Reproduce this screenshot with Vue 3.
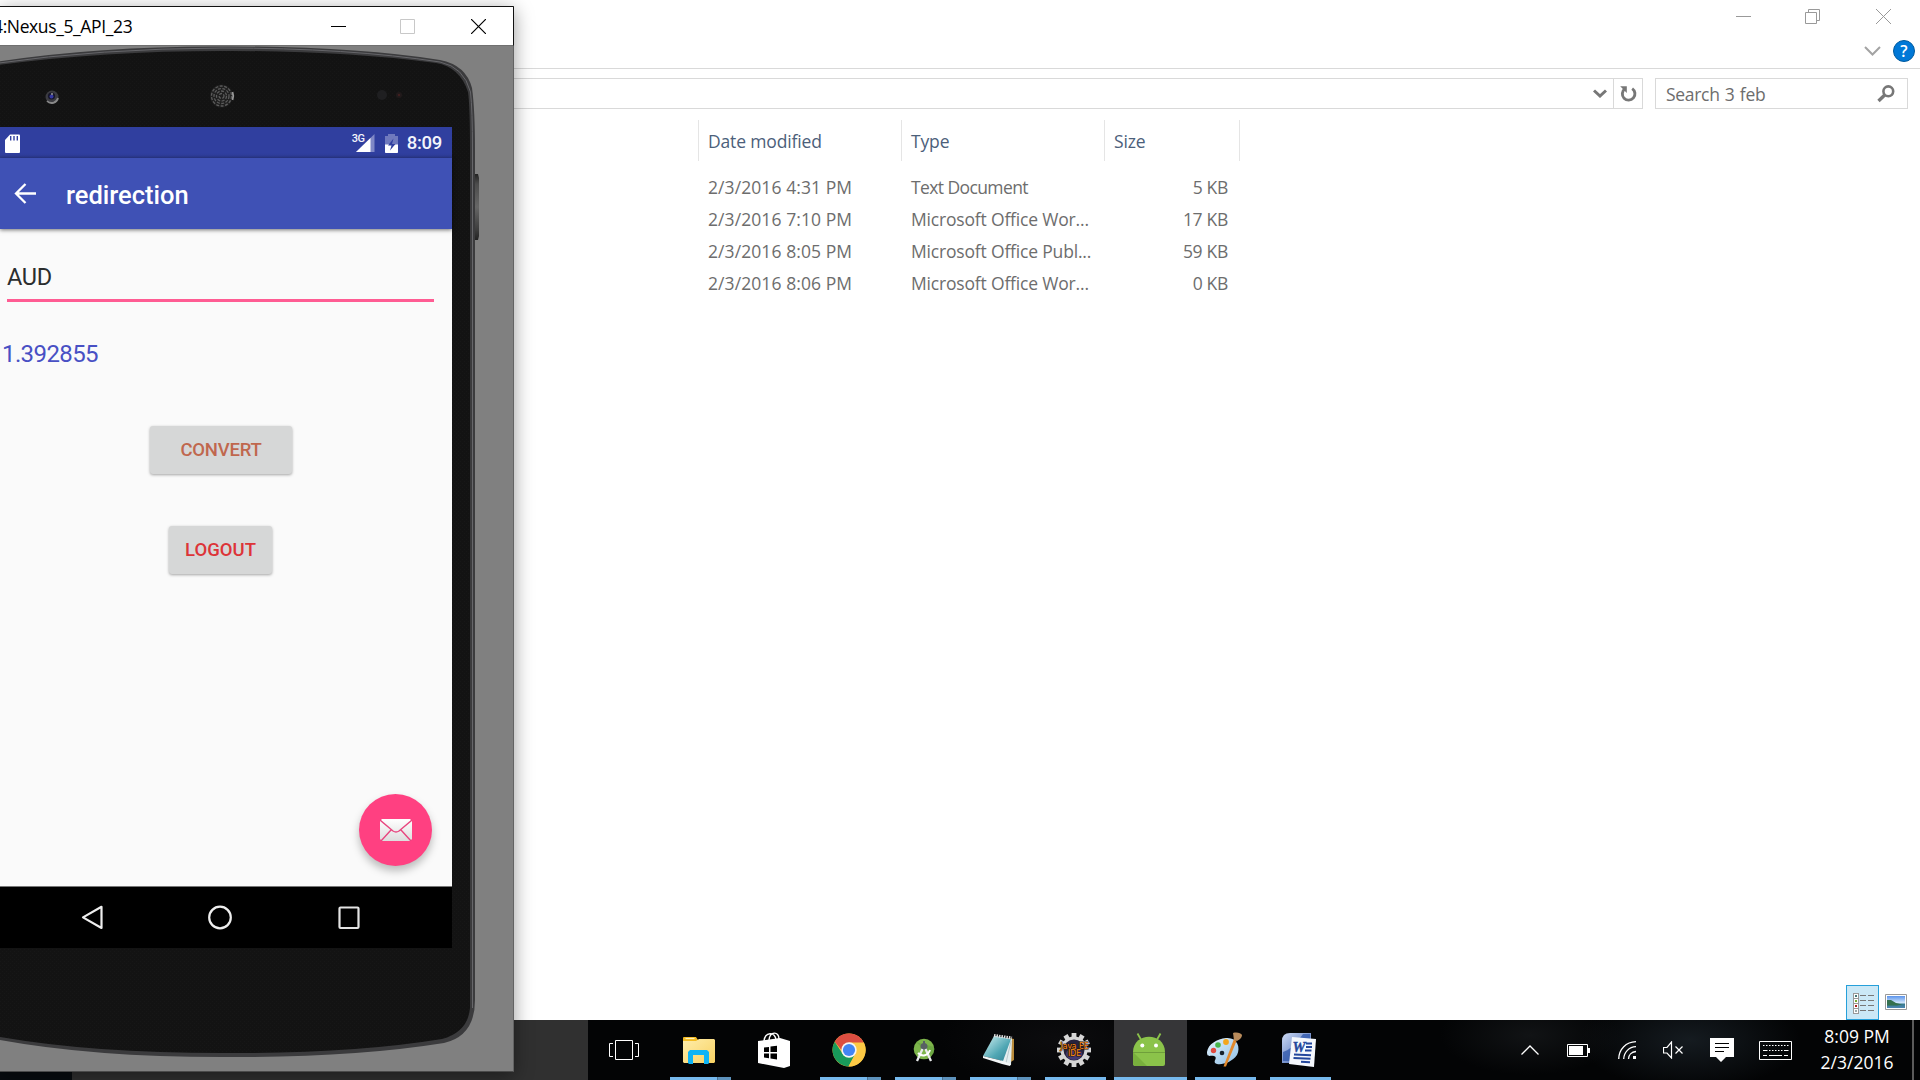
<script setup>
const files = [
  { date: '2/3/2016 4:31 PM', type: 'Text Document', size: '5 KB', tight: true },
  { date: '2/3/2016 7:10 PM', type: 'Microsoft Office Wor...', size: '17 KB' },
  { date: '2/3/2016 8:05 PM', type: 'Microsoft Office Publ...', size: '59 KB' },
  { date: '2/3/2016 8:06 PM', type: 'Microsoft Office Wor...', size: '0 KB' },
]
const teeth = Array.from({ length: 12 }, (_, i) => i * 30)
const speakerArcs = [2.5, 5, 7.5, 10]
</script>

<template>
  <div class="desktop">
    <main class="explorer">
      <header class="caption">
        <svg class="cap-min" width="15" height="15"><path d="M0 7.500H15" /></svg>
        <svg class="cap-max" width="15" height="15"><path d="M.5 3.500h11v11H.5zM3.500 3V.5h11v11H12" /></svg>
        <svg class="cap-close" width="15" height="15"><path d="M0 0L15 15M15 0L0 15" /></svg>
      </header>
      <div class="ribbon">
        <svg width="17" height="10"><path d="M1 1l7.500 7.500L16 1" fill="none" stroke="#a3a3a3" stroke-width="2" /></svg>
        <div class="help">?</div>
      </div>
      <div class="nav">
        <div class="address">
          <svg width="14" height="9"><path d="M1 1.500l6 5.500 6-5.500" fill="none" stroke="#777" stroke-width="3" /></svg>
        </div>
        <div class="refresh">
          <svg width="18" height="18" viewBox="0 0 18 18"><path d="M5.800 3.800A6.300 6.300 0 1 0 13.200 3.600" fill="none" stroke="#777" stroke-width="2.900" /><path d="M1.200 1.200H7.800V8z" fill="#777" /></svg>
        </div>
        <div class="search">
          <span>Search 3 feb</span>
          <svg width="18" height="18" viewBox="0 0 18 18"><circle cx="11.300" cy="6.300" r="4.900" fill="none" stroke="#777" stroke-width="2.600" /><path d="M7.700 10L1.500 16" stroke="#777" stroke-width="3.400" /></svg>
        </div>
      </div>
      <section class="list">
        <div class="row head">
          <div class="c-date">Date modified</div>
          <div class="c-type">Type</div>
          <div class="c-size"><span>Size</span></div>
        </div>
        <div v-for="(f, i) in files" :key="i" class="row">
          <div class="c-date">{{ f.date }}</div>
          <div class="c-type" :class="{ tight: f.tight }">{{ f.type }}</div>
          <div class="c-size">{{ f.size }}</div>
        </div>
      </section>
      <footer class="views">
        <div class="details">
          <svg width="22" height="22" viewBox="0 0 22 22" shape-rendering="crispEdges">
            <g fill="#fff" stroke="#999"><path d="M.5 .5h5v5h-5zM.5 5.500h5v5h-5zM.5 10.500h5v5h-5zM.5 15.500h5v5h-5z" /></g>
            <path d="M2 2h2v2H2z" fill="#477" /><path d="M2 7h2v2H2z" fill="#7a3" /><path d="M2 12h2v2H2z" fill="#a22" /><path d="M2 17h2v2H2z" fill="#9aa" />
            <path d="M7 2.500h6M15 2.500h6M7 7.500h6M15 7.500h6M7 12.500h6M15 12.500h6M7 17.500h6M15 17.500h6" stroke="#777" />
          </svg>
        </div>
        <svg class="thumb" width="22" height="16" viewBox="0 0 22 16">
          <defs><linearGradient id="sky" x2="0" y2="1"><stop offset="0" stop-color="#5b93ec" /><stop offset=".55" stop-color="#cfe5fb" /><stop offset=".7" stop-color="#3a7a8e" /><stop offset="1" stop-color="#4c86b4" /></linearGradient></defs>
          <path d="M.5 .5h21v15H.5z" fill="#fff" stroke="#999" /><path d="M2 2h18v12H2z" fill="url(#sky)" /><path d="M2 6l4 0 5 3 6 1.500-5 1H2z" fill="#34704e" />
        </svg>
      </footer>
    </main>

    <div class="taskbar">
      <div class="covered"><i></i></div>
      <div class="tb-btn">
        <svg class="ico-view" width="30" height="20"><path d="M6.500 .5h17v19h-17zM4 3.500H.5v13H4M26 3.500h3.500v13H26" fill="none" stroke="#fff" /></svg>
      </div>
      <div class="tb-btn open multi">
        <svg width="32" height="36" viewBox="0 0 32 36">
          <defs><linearGradient id="fold" x2="1" y2="1"><stop offset="0" stop-color="#ffedaa" /><stop offset="1" stop-color="#f8d263" /></linearGradient></defs>
          <path d="M0 6a1 1 0 0 1 1-1h12l2 3h17v22H0z" fill="#f3bb22" /><path d="M2.500 6.500h9" stroke="#fff2bd" stroke-width="1.200" />
          <path d="M0 9h13l3-2h15l1 1v22l-1 1H1l-1-1z" fill="url(#fold)" /><path d="M5 31V20l2-2h17l2 2v11l-1 1h-4v-9H10v9H6z" fill="#0eb4f5" />
        </svg>
      </div>
      <div class="tb-btn">
        <svg width="32" height="36" viewBox="0 0 32 36">
          <path d="M6 9C7 0 17-1 18 8M11 8C12-1 21-1 21 7" fill="none" stroke="#fff" stroke-width="1.400" />
          <path d="M0 9L22 6 32 9V34L26 36 0 31z" fill="#fff" />
          <path d="M6 15.500l5-.6V20H6zM12.500 14.600l6.500-.9V20h-6.500zM6 21.500h5v4.800l-5-.7zM12.500 21.500H19v6l-6.500-1z" fill="#000" />
        </svg>
      </div>
      <div class="tb-btn open multi">
        <svg width="34" height="34" viewBox="-17 -17 34 34">
          <circle r="16.500" fill="#fbc53c" />
          <path d="M-14.300-8.200A16.500 16.500 0 0 1 14.900-7H0L-5 3z" fill="#dc4e41" />
          <path d="M-14.300-8.200L-6.200 4 6 4 -0.500 16.500A16.500 16.500 0 0 1-14.300-8.200z" fill="#189a5a" />
          <path d="M0-7.500H14.900A16.500 16.500 0 0 1-.5 16.500L6.500 4z" fill="#fdca45" />
          <circle r="7.700" fill="#f5f5f5" /><circle r="6.100" fill="#4285f4" />
        </svg>
      </div>
      <div class="tb-btn open multi">
        <svg width="22" height="24" viewBox="0 0 22 24">
          <circle cx="11" cy="11" r="10.300" fill="#7db54b" /><path d="M3 4L18 18A10 10 0 0 0 21 9z" fill="#5d9b3b" opacity=".5" />
          <circle cx="11" cy="8.500" r="3.500" fill="#586064" /><path d="M10 3h2v4h-2z" fill="#586064" />
          <path d="M9.500 11L4 23M12.500 11L18 23" stroke="#e9ebec" stroke-width="2.300" /><path d="M5 15c4 4 10 3 12-3" fill="none" stroke="#fff" stroke-width="2" />
        </svg>
      </div>
      <div class="tb-btn open multi">
        <svg width="34" height="34" viewBox="0 0 34 34">
          <defs><linearGradient id="pad" x2="1" y2="1"><stop offset="0" stop-color="#d5f1f2" /><stop offset=".6" stop-color="#50a7b4" /><stop offset="1" stop-color="#2f7f93" /></linearGradient></defs>
          <path d="M27 5l5 1V27l-5 3z" fill="#b98b3b" /><path d="M13 3l17 3-1 26-9-2z" fill="#e4eef0" /><path d="M24 30L29 8" stroke="#9db1b6" stroke-width=".6" />
          <path d="M12 3l17 3-8 22L1 23z" fill="url(#pad)" /><path d="M1 23l20 5 8 3-1 2-8-2L1 25z" fill="#f2f7f8" />
          <path d="M12 2.500l18 2.500" stroke="#ddd" stroke-width="3" stroke-dasharray="1.500 1" />
        </svg>
      </div>
      <div class="tb-btn open">
        <svg class="java" width="34" height="36" viewBox="-17 -18 34 36">
          <rect v-for="a in teeth" :key="a" x="-2.400" y="-17" width="4.800" height="7" fill="#d6d6d6" :transform="`rotate(${a})`" />
          <circle r="12" fill="#26233c" stroke="#d6d6d6" stroke-width="3" /><ellipse cy="4" rx="8" ry="6" fill="#51448a" opacity=".7" />
          <g fill="#ff8c1e" stroke="#2a1705" stroke-width="1.200" paint-order="stroke" font-family="DejaVu Sans, sans-serif" text-anchor="middle"><text x=".5" y="-1.200" font-size="8.500" textLength="28" lengthAdjust="spacingAndGlyphs">Java EE</text><text x=".5" y="6.300" font-size="8.500" textLength="13" lengthAdjust="spacingAndGlyphs">IDE</text></g>
        </svg>
      </div>
      <div class="tb-btn open active">
        <svg width="32" height="34" viewBox="0 0 32 34">
          <path d="M4.500 .5l4 7M27.500 .5l-4 7" stroke="#8bc34a" stroke-width="1.800" />
          <path d="M0 19C0 -1.500 32 -1.500 32 19V31a2 2 0 0 1-2 2H2a2 2 0 0 1-2-2z" fill="#8bc34a" />
          <path d="M0 19L14 33H2l-2-2z" fill="#79b03d" /><path d="M0 19.500H32" stroke="#6f9f3b" />
          <circle cx="9.300" cy="12.500" r="2" fill="#fff" /><circle cx="23" cy="12.500" r="2" fill="#fff" />
        </svg>
      </div>
      <div class="tb-btn open">
        <svg width="36" height="36" viewBox="0 0 36 36">
          <defs><linearGradient id="pal" x2="1" y2="1"><stop offset="0" stop-color="#e5f3fd" /><stop offset="1" stop-color="#8fc0e6" /></linearGradient></defs>
          <path d="M20 6C31 5 35 15 31 23 26 30 17 33 11 32 5 30 13 26 8 24 4 23 1 26 1 20 2 12 11 7 20 6z" fill="url(#pal)" />
          <circle cx="16" cy="21" r="2.300" fill="#16222c" /><circle cx="7.500" cy="18.500" r="2.700" fill="#e04b41" /><circle cx="12" cy="13" r="2.800" fill="#48b54c" /><circle cx="20" cy="10" r="2.900" fill="#f3a61e" />
          <path d="M28 7L17.500 34.500l2.500 0L30.500 9z" fill="#e38a2d" /><path d="M27 1c4-1 8 0 9 2 0 3-3 5-5 6l-3-1z" fill="#b88b5c" />
        </svg>
      </div>
      <div class="tb-btn open">
        <svg width="36" height="36" viewBox="0 0 36 36">
          <defs><linearGradient id="wd" x2="1" y2="1"><stop offset="0" stop-color="#cfdcf5" /><stop offset="1" stop-color="#2c52a7" /></linearGradient></defs>
          <path d="M1 31V9Q1 1 9 1h21v17L16 31z" fill="url(#wd)" /><path d="M2 29V20Q12 17 22 2h7v17L15 29z" fill="#2d55a9" opacity=".75" />
          <path d="M11 5l24 2-2 28L8 32z" fill="#f5f8fd" />
          <path d="M25 11.500h6M25 15h6M24 18.500h6.500M13 22.500l17 .8M12.500 26l17 .8M20 29.800l9 .5" stroke="#23479c" stroke-width="2" />
          <text x="11.500" y="20" fill="#23479c" stroke="#23479c" stroke-width=".4" font-family="Liberation Serif, serif" font-style="italic" font-weight="bold" font-size="15" textLength="13" lengthAdjust="spacingAndGlyphs">W</text>
        </svg>
      </div>
      <div class="tray">
        <svg width="18" height="10"><path d="M.5 9.500L9 1l8.500 8.500" fill="none" stroke="#fff" stroke-width="1.300" /></svg>
        <svg width="23" height="13" class="g28"><path d="M.5 .5h20v12H.5z" fill="none" stroke="#fff" /><path d="M2 2h14v9H2zM21 4h2v5h-2z" fill="#fff" /></svg>
        <svg width="18" height="18" class="g28"><g fill="none" stroke="#fff" stroke-width="1.300"><path d="M.7 18C1 8 8 1 18 .7M5.700 18C6 11 11 6 18 5.700M10.500 18c0-4 3-7 7.500-7.500" /></g><path d="M15 15h3v3h-3z" fill="#fff" /></svg>
        <svg width="20" height="18" class="g27"><path d="M.5 6.500H4L8.500 1v16L4 12H.5zM12.500 5.500l7 7M19.500 5.500l-7 7" fill="none" stroke="#fff" stroke-width="1.200" /></svg>
        <svg width="24" height="24" class="g27"><path d="M0 0h24v19h-8l-5 5-5-5H0z" fill="#fff" /><path d="M5 5.500h14M5 9.500h14M5 13.500h9" stroke="#000" /></svg>
        <svg width="33" height="19" class="g25"><path d="M.5 .5h32v18H.5z" fill="none" stroke="#fff" /><path d="M4 4.500h26M4 9.500h26" stroke="#fff" stroke-dasharray="1.500 1.500" /><path d="M4 14.500h4M10 14.500h13M25 14.500h4M4 9.500h4M25 9.500h4" stroke="#fff" /></svg>
        <div class="clock"><span>8:09 PM</span><span>2/3/2016</span></div>
        <i class="peek"></i>
      </div>
    </div>

    <div class="emulator">
      <header class="title">
        <div class="name"><span>4:Nexus_5_API_23</span></div>
        <svg class="w-min" width="15" height="15"><path d="M0 7.500H15" stroke="#000" /></svg>
        <svg class="w-max" width="15" height="15"><path d="M.5 .5h14v14H.5z" fill="none" stroke="#c8c8c8" /></svg>
        <svg class="w-close" width="15" height="15"><path d="M0 0L15 15M15 0L0 15" stroke="#000" stroke-width="1.200" /></svg>
      </header>
      <div class="device">
        <svg class="shell" width="513" height="1025" viewBox="0 46 513 1025">
          <defs>
            <pattern id="grain" width="4" height="4" patternUnits="userSpaceOnUse"><path d="M0 0h4v4H0z" fill="#131313" /><path d="M0 1h1v1H0zM2 3h1v1H2z" fill="#171717" /></pattern>
            <linearGradient id="key" x2="0" y2="1"><stop offset="0" stop-color="#222" /><stop offset=".15" stop-color="#4c4c4c" /><stop offset=".5" stop-color="#666" /><stop offset=".85" stop-color="#3c3c3c" /><stop offset="1" stop-color="#222" /></linearGradient>
          </defs>
          <path d="M474 174h4l1 4v58l-1 4h-4z" fill="url(#key)" />
          <path d="M-5 62Q100 46 222 46.500Q350 46 440 60Q466 65 472 88Q475 110 475 150V1000Q475 1036 444 1043Q350 1058 222 1057Q90 1057-5 1039z" fill="#3b3b3d" />
          <path d="M-5 63.500Q100 48.500 222 48Q350 48 440 62Q464 67 470.500 92Q472.500 110 472.500 150V1008" fill="none" stroke="#66666a" stroke-width="1" />
          <path d="M-5 65.500Q100 51 222 51Q340 50.500 436 63Q460 67 468 92Q470 105 470 150V1008Q468 1032 442 1039Q350 1054 222 1053Q90 1053-5 1036z" fill="url(#grain)" />
          <circle cx="52" cy="97" r="6.500" fill="#3c3c41" /><path d="M47 101a6.500 6.500 0 0 0 11-3" fill="none" stroke="#888" stroke-width="1.800" /><circle cx="51.500" cy="96" r="3.600" fill="#17172b" /><circle cx="51.500" cy="96.500" r="2" fill="#3538a2" /><circle cx="52" cy="94" r="1" fill="#999" />
          <circle cx="221.500" cy="96" r="11.500" fill="#1f1f1f" />
          <g fill="none" stroke="#5c5c5c" stroke-width="1.300" stroke-dasharray="3 1.500"><circle v-for="r in speakerArcs" :key="r" cx="221.500" cy="96" :r="r" /></g>
          <path d="M232.500 92a11 11 0 0 1 0 8" fill="none" stroke="#999" stroke-width="1.800" />
          <circle cx="382" cy="95" r="5" fill="#1f1f21" /><circle cx="399" cy="95" r="3" fill="#211a1b" /><circle cx="399" cy="95" r="1" fill="#4a2020" />
        </svg>
        <div class="screen">
          <div class="status">
            <svg class="sd" width="15" height="19" viewBox="0 0 15 19"><path d="M5 .5h9a1 1 0 0 1 1 1V18a1 1 0 0 1-1 1H1a1 1 0 0 1-1-1V6z" fill="#fff" /><path d="M5.700 2v4.500M9 2v4.500M12.300 2v4.500" stroke="#303f9f" stroke-width="1.400" /></svg>
            <div class="signal">
              <svg width="19" height="18"><path d="M18.500 0V18H0z" fill="#7f88c6" /><path d="M14.500 4V18H0z" fill="#fff" /></svg>
              <span>3G</span>
            </div>
            <svg class="batt" width="13" height="19" viewBox="0 0 13 19"><path d="M0 2h3V0h7v2h3v17H0z" fill="#6f79bd" /><path d="M0 10.500h13V18a1 1 0 0 1-1 1H1a1 1 0 0 1-1-1z" fill="#fff" /><path d="M8.500 4.500L3 11.500h3.500L5 16.500l5.500-6.500H7z" fill="#303f9f" /></svg>
            <span class="time">8:09</span>
          </div>
          <div class="toolbar">
            <svg width="22" height="21" viewBox="0 0 22 21"><path d="M11.500 1L2 10.500 11.500 20M2 10.500H22" fill="none" stroke="#fff" stroke-width="2.300" /></svg>
            <span>redirection</span>
          </div>
          <div class="content">
            <div class="field"><span>AUD</span></div>
            <div class="rate"><span>1.392855</span></div>
            <div class="btn convert"><span>CONVERT</span></div>
            <div class="btn logout"><span>LOGOUT</span></div>
            <div class="fab">
              <svg width="32" height="22" viewBox="0 0 32 22"><defs><linearGradient id="env" x2="0" y2="1"><stop offset="0" stop-color="#fff" /><stop offset="1" stop-color="#ddd" /></linearGradient></defs><path d="M2 0h28l2 2v18l-2 2H2l-2-2V2z" fill="url(#env)" /><path d="M0 1l13 11q3 2 6 0L32 1M1 22l10-11M31 22L21 11" fill="none" stroke="#e8457f" stroke-width="1.400" /></svg>
            </div>
          </div>
          <div class="softkeys">
            <svg width="22" height="25"><path d="M20.500 1.800V23L2 12.400z" fill="none" stroke="#eee" stroke-width="2.200" stroke-linejoin="round" /></svg>
            <svg width="25" height="25"><circle cx="12" cy="12.500" r="10.800" fill="none" stroke="#eee" stroke-width="2.200" /></svg>
            <svg width="22" height="25"><rect x="1.500" y="2.500" width="19" height="20.500" rx="1" fill="none" stroke="#e4e4e4" stroke-width="2.200" /></svg>
          </div>
        </div>
      </div>
    </div>
  </div>
</template>

<style>
body { overflow: hidden; background: #fff; }
</style>

<style scoped>
* { box-sizing: border-box; }
svg { display: block; flex: none; }
.desktop { position: relative; width: 1920px; height: 1080px; overflow: hidden; display: flex; flex-direction: column; font: 17.5px/24px "Open Sans", "Noto Sans", sans-serif; color: #6d6d6d; }
.explorer { height: 1020px; background: #fff; display: flex; flex-direction: column; }
.caption { height: 33px; padding: 9px 29px 0 0; display: flex; justify-content: flex-end; }
.caption path { fill: none; stroke: #999; }
.cap-max { margin-left: 54px; }
.cap-close { margin-left: 56px; }
.ribbon { height: 36px; border-bottom: 1px solid #d9d9d9; display: flex; justify-content: flex-end; align-items: center; padding-right: 5px; gap: 12px; }
.help { width: 22px; height: 22px; border-radius: 50%; background: #0078d7; border: 1px solid #005a9e; color: #fff; font-weight: 600; font-size: 16px; line-height: 20px; text-align: center; }
.nav { display: flex; height: 51px; padding-top: 9px; padding-right: 12px; }
.nav > div { height: 31px; border: 1px solid #d9d9d9; display: flex; align-items: center; }
.address { flex: 1; justify-content: flex-end; padding-right: 6px; }
.nav .refresh { width: 30px; margin-left: -1px; justify-content: center; }
.search { width: 253px; margin-left: 12px; padding: 0 12px 0 10px; justify-content: space-between; letter-spacing: -.3px; word-spacing: 1px; }
.list { margin-left: 698px; flex: 1; }
.row { display: flex; height: 32px; width: 542px; align-items: center; white-space: nowrap; }
.row > div { padding-left: 10px; }
.c-date { width: 203px; letter-spacing: .08px; }
.c-type { width: 203px; letter-spacing: -.18px; }
.tight { letter-spacing: -.6px; }
.c-size { width: 136px; text-align: right; padding-right: 12px; letter-spacing: -.3px; }
.head { height: 41px; margin-bottom: 10px; color: #4c607a; align-items: stretch; }
.head > div { border-left: 1px solid #e5e5e5; padding-left: 9px; line-height: 43px; text-align: left; letter-spacing: -.15px; }
.head .c-size { border-right: 1px solid #e5e5e5; }
.views { display: flex; justify-content: flex-end; align-items: center; gap: 6px; height: 35px; padding-right: 13px; }
.thumb { margin-top: -2px; }
.details { width: 33px; height: 35px; background: #cbe8f6; border: 1px solid #26a0da; display: flex; align-items: center; padding: 2px 0 0 6px; }

.taskbar { height: 60px; display: flex; background: radial-gradient(ellipse 110px 50px at 1690px 20px, #151b20, transparent), radial-gradient(ellipse 90px 40px at 1530px 15px, #111315, transparent), radial-gradient(ellipse 120px 50px at 1060px 20px, #0c0c0e, transparent), #030405; }
.covered { width: 588px; background: #303030; display: flex; align-items: flex-end; }
.covered i { width: 72px; height: 8px; background: #080c10; }
.tb-btn { width: 75px; height: 60px; padding-right: 3px; display: flex; align-items: center; justify-content: center; position: relative; }
.tb-btn.open::after { content: ""; position: absolute; left: 7px; right: 7px; bottom: 0; height: 3px; background: #76b9ed; }
.tb-btn.multi::after { background: linear-gradient(90deg, #76b9ed 47px, #4a7191 47px, #4a7191 48px, #5d92bc 48px); }
.tb-btn.active { width: 73px; margin: 0 1px; background: #363638; }
.tb-btn.active::after { left: 0; right: 0; }
.tray { margin-left: auto; display: flex; align-items: center; height: 60px; padding-right: 6px; }
.g28 { margin-left: 28px; } .g27 { margin-left: 27px; } .g25 { margin-left: 25px; }
.clock { width: 94px; margin-left: 18px; margin-right: 2px; display: flex; flex-direction: column; align-items: center; color: #fff; line-height: 26px; padding-bottom: 3px; letter-spacing: 0; }
.peek { width: 2px; height: 60px; background: #5b5b5b; margin-left: 6px; }

.emulator { position: absolute; left: 0; top: 6px; width: 514px; height: 1066px; border: 1px solid #111; border-left: 0; border-color: #111 #636363 #4a4a4a; box-shadow: 0 4px 18px rgba(0,0,0,.4); background: #808080; display: flex; flex-direction: column; }
.title { height: 39px; background: #fff; border-bottom: 1px solid #707070; display: flex; align-items: center; width: 514px; border-right: 1px solid #111; }
.name { width: 331px; overflow: hidden; color: #000; padding-bottom: 1px; }
.name span { margin-left: -7px; letter-spacing: -.38px; }
.w-max { margin-left: 54px; }
.w-close { margin-left: 56px; }
.device { position: relative; flex: 1; padding-top: 81px; font-family: Roboto, sans-serif; }
.shell { position: absolute; left: 0; top: 0; }
.screen { position: relative; width: 452px; height: 821px; display: flex; flex-direction: column; background: #fafafa; }
.status { height: 31px; background: linear-gradient(#303f9f 27px, #2c3a90); display: flex; align-items: center; padding: 1px 10px 0 5px; color: #f4f5fb; }
.signal { margin-left: auto; margin-right: 10px; position: relative; }
.signal span { position: absolute; left: -4px; top: -1px; font: 500 11px/11px Roboto, sans-serif; letter-spacing: -.6px; }
.batt { margin-right: 9px; }
.time { font-weight: 500; font-size: 18.5px; letter-spacing: -.3px; }
.toolbar { height: 71px; background: #3f51b5; display: flex; align-items: center; padding-left: 14px; gap: 30px; color: #fff; font-weight: 500; font-size: 25.5px; position: relative; box-shadow: 0 1px 4px rgba(0,0,0,.55); }
.toolbar span { padding-top: 2px; }
.content { height: 658px; position: relative; border-bottom: 1px solid #777; }
.field { width: 427px; height: 48px; margin: 25px 0 0 7px; border-bottom: 3px solid #ff5c93; font-size: 23.5px; color: #2b2d2e; line-height: 47px; letter-spacing: -.3px; }
.rate { margin: 38px 0 0 2px; font-size: 24px; color: #4850c4; line-height: 28px; letter-spacing: -.6px; }
.btn { height: 48px; background: #d6d7d7; border-radius: 3px; box-shadow: 0 1px 3px rgba(0,0,0,.35); text-align: center; font-weight: 500; font-size: 18.500px; line-height: 49px; }
.convert { width: 142px; margin: 58px 0 0 150px; color: #c0674e; letter-spacing: -.25px; }
.logout { width: 103px; margin: 52px 0 0 169px; color: #dd3438; }
.fab { position: absolute; left: 359px; top: 565px; width: 73px; height: 72px; border-radius: 50%; background: #ff4081; box-shadow: 0 5px 9px rgba(0,0,0,.26); display: flex; align-items: center; justify-content: center; }
.softkeys { flex: 1; background: #000; display: flex; align-items: center; justify-content: space-between; padding: 0 92px 0 81px; }
</style>
